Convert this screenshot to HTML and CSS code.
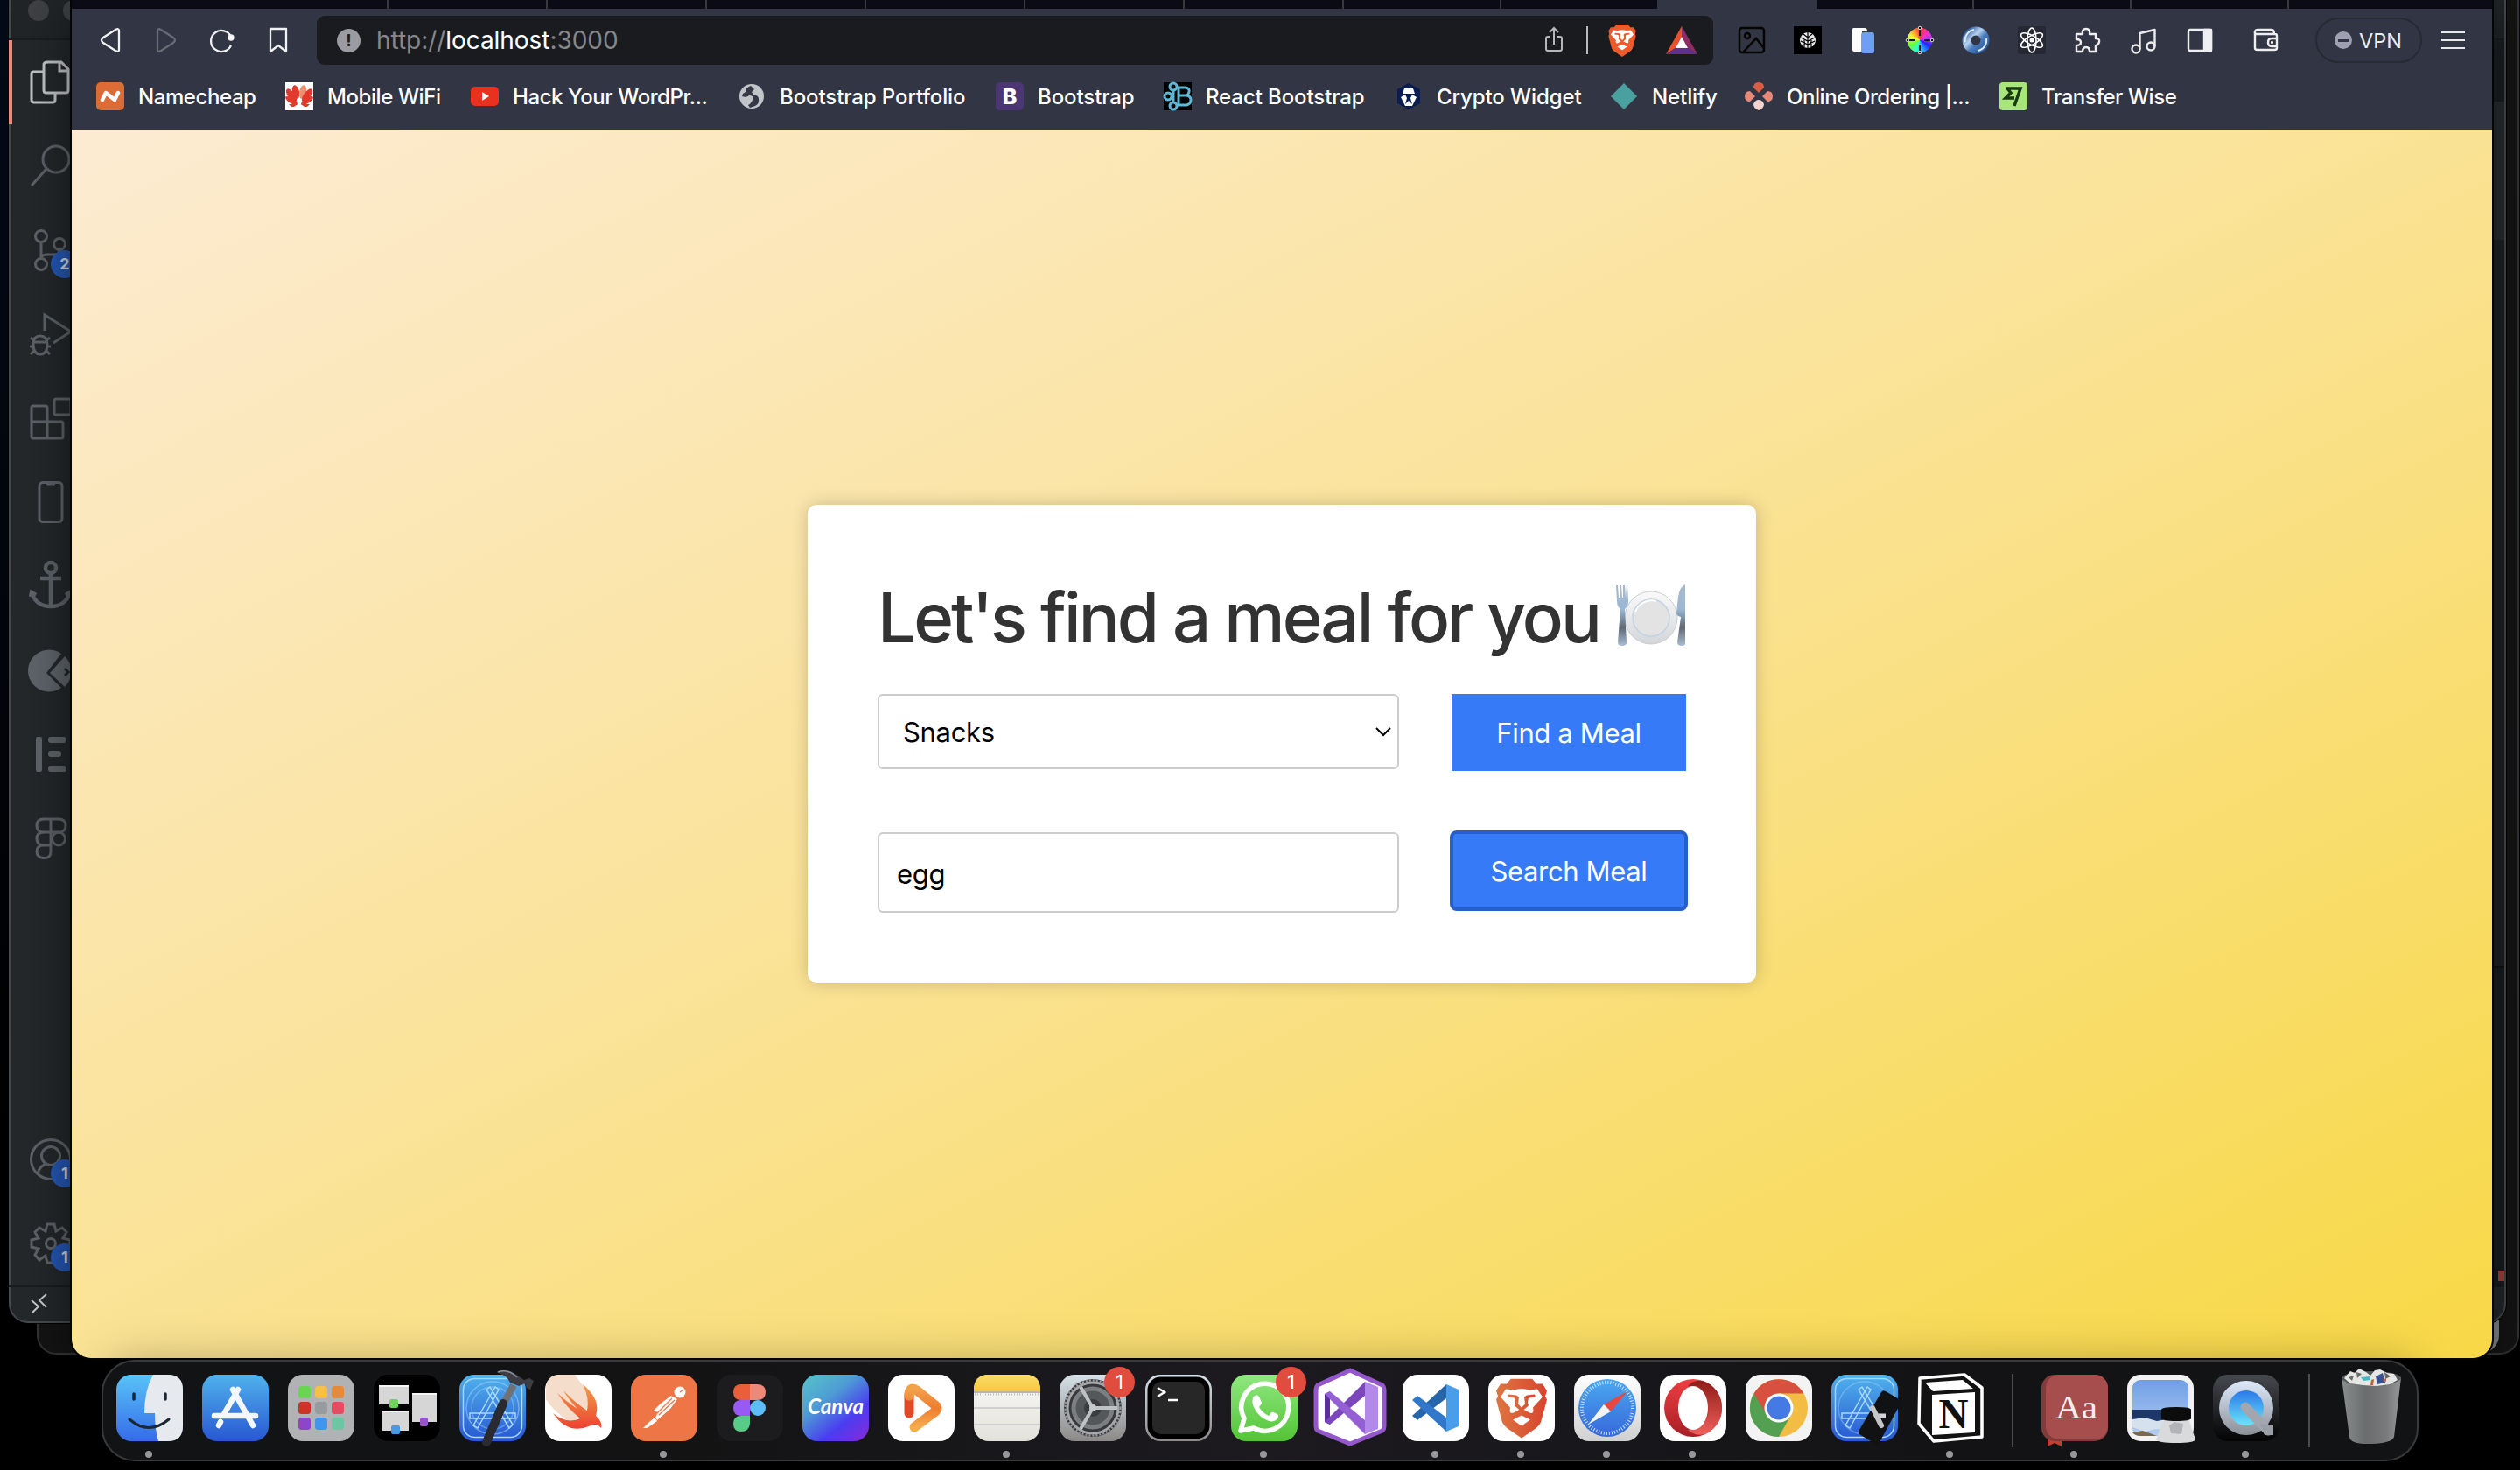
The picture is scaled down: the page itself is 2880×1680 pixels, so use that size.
FILE: index.html
```html
<!DOCTYPE html>
<html lang="en">
<head>
<meta charset="utf-8">
<title>Meal Finder</title>
<link rel="stylesheet" href="styles.css">
</head>
<body>
<svg class="defs" aria-hidden="true">
  <defs>
    <symbol id="brave" viewBox="0 0 58 68">
      <path d="M17 0H41L46 6L53 6L58 14L56 20L58 24L51 50Q49 54 45 57L29 68L13 57Q9 54 7 50L0 24L2 20L0 14L5 6L12 6Z"/>
      <path fill="#fff" d="M11 12L20 13Q29 10 38 13L47 12L53 21L42 33Q44 41 38 39L29 34L20 39Q14 41 16 33L5 21ZM29 42L39 47L29 54L19 47Z"/>
      <path d="M14 18L23 19L26 21L25 29L29 33L33 29L32 21L35 19L44 18L45 21L37 22L36 27L37 31L31 36V40H27V36L21 31L22 27L21 22L13 21Z"/>
    </symbol>
    <linearGradient id="gBlue" x1="0" y1="0" x2="0" y2="1"><stop stop-color="#50b2ec"/><stop offset="1" stop-color="#2857d2"/></linearGradient>
    <linearGradient id="gFinder" x1="0" y1="0" x2="0" y2="1"><stop stop-color="#58c4f8"/><stop offset="1" stop-color="#356be8"/></linearGradient>
    <linearGradient id="gSwift" x1="0" y1="0" x2="0" y2="1"><stop stop-color="#f2a04a"/><stop offset="1" stop-color="#ec4230"/></linearGradient>
    <linearGradient id="gCanva" x1="0" y1="0" x2=".8" y2="1"><stop stop-color="#58c4c8"/><stop offset=".4" stop-color="#4d9cd4"/><stop offset=".75" stop-color="#4a3df0"/><stop offset="1" stop-color="#7a2de0"/></linearGradient>
    <linearGradient id="gPlay" x1="0" y1="0" x2="0" y2="1"><stop stop-color="#f3a24c"/><stop offset=".5" stop-color="#ee7d30"/><stop offset="1" stop-color="#f5ac4d"/></linearGradient>
    <linearGradient id="gNote" x1="0" y1="0" x2="0" y2="1"><stop stop-color="#f8dc6c"/><stop offset="1" stop-color="#f6c93c"/></linearGradient>
    <linearGradient id="gPaper" x1="0" y1="0" x2="0" y2="1"><stop stop-color="#fafaf8"/><stop offset="1" stop-color="#e2e1da"/></linearGradient>
    <linearGradient id="gGrey" x1="0" y1="0" x2="0" y2="1"><stop stop-color="#d4e0e8"/><stop offset="1" stop-color="#8c8a88"/></linearGradient>
    <linearGradient id="gWa" x1="0" y1="0" x2="0" y2="1"><stop stop-color="#8fe880"/><stop offset="1" stop-color="#53c436"/></linearGradient>
    <linearGradient id="gBrave" x1="0" y1="0" x2="1" y2="0"><stop stop-color="#dd7540"/><stop offset="1" stop-color="#d8452f"/></linearGradient>
    <linearGradient id="gSafari" x1="0" y1="0" x2="0" y2="1"><stop stop-color="#4aa8f0"/><stop offset="1" stop-color="#3668da"/></linearGradient>
    <linearGradient id="gSilver" x1="0" y1="0" x2="0" y2="1"><stop stop-color="#fff"/><stop offset="1" stop-color="#d0d0d0"/></linearGradient>
    <linearGradient id="gOpera" x1="0" y1="0" x2="0" y2="1"><stop stop-color="#ee3f42"/><stop offset="1" stop-color="#a81e26"/></linearGradient>
    <linearGradient id="gOpera2" x1="0" y1="0" x2="0" y2="1"><stop stop-color="#8e1c18"/><stop offset="1" stop-color="#f0605c"/></linearGradient>
    <linearGradient id="gQt" x1="0" y1="0" x2="0" y2="1"><stop stop-color="#46494f"/><stop offset="1" stop-color="#030303"/></linearGradient>
    <linearGradient id="gQtIn" x1="0" y1="0" x2="0" y2="1"><stop stop-color="#2a78e8"/><stop offset="1" stop-color="#6ae4fa"/></linearGradient>
    <linearGradient id="gQtRing" x1="0" y1="0" x2="0" y2="1"><stop stop-color="#dde9fa"/><stop offset="1" stop-color="#8b9098"/></linearGradient>
    <linearGradient id="gSky" x1="0" y1="0" x2="0" y2="1"><stop stop-color="#6f9ee6"/><stop offset="1" stop-color="#b4cdf2"/></linearGradient>
    <linearGradient id="gTrash" x1="0" y1="0" x2="1" y2="0"><stop stop-color="#8b8e8f"/><stop offset=".4" stop-color="#6a6d6e"/><stop offset=".75" stop-color="#77797a"/><stop offset="1" stop-color="#969899"/></linearGradient>
    <linearGradient id="gPlate" x1="0" y1="0" x2="0" y2="1"><stop stop-color="#fafafa"/><stop offset="1" stop-color="#d3d6da"/></linearGradient>
    <linearGradient id="gMetal" x1="0" y1="0" x2="0" y2="1"><stop stop-color="#a9b8c8"/><stop offset=".4" stop-color="#9ab8d6"/><stop offset=".7" stop-color="#5f6873"/><stop offset="1" stop-color="#a9bdd2"/></linearGradient>
    <linearGradient id="gRing" x1="0" y1="0" x2="1" y2="1"><stop stop-color="#2f5f9f"/><stop offset=".35" stop-color="#b9d3f0"/><stop offset=".6" stop-color="#4a7cbd"/><stop offset="1" stop-color="#2c5a98"/></linearGradient>
  </defs>
</svg>

<main class="desktop">
  <div class="win win-back"></div>
  <div class="win win-mid"></div>

  <section class="win editor">
    <div class="editor-title"><i class="dot"></i><i class="dot"></i></div>
    <div class="editor-body">
      <nav class="activity">
        <div class="act active"><svg viewBox="0 0 48 48"><path d="M16 12H4Q2 12 2 14V44Q2 47 5 47H26Q29 47 29 44V37M20 1H36L44 9V33Q44 36 41 36H19Q16 36 16 33V4Q16 1 20 1ZM34 1V11H44"/></svg></div>
        <div class="act"><svg viewBox="0 0 48 48"><circle cx="30" cy="16" r="15"/><path d="M19 27L2 46"/></svg></div>
        <div class="act"><svg viewBox="0 0 48 48"><circle cx="13" cy="8" r="6.5"/><circle cx="13" cy="40" r="6.5"/><circle cx="34" cy="17" r="6.5"/><path d="M13 15V33M34 24Q34 29 28 29H20Q14 29 13 33"/></svg><b class="badge">2</b></div>
        <div class="act"><svg viewBox="0 0 48 48"><path d="M17 20V2L47 21L27 34"/><path d="M4 35Q4 26 12 26T20 35Q20 47 12 47T4 35ZM4 33H20M0 38H4M20 38H24M1 28L5 31M23 28L19 31M1 47L5 43M23 47L19 43"/></svg></div>
        <div class="act"><svg viewBox="0 0 48 48"><path d="M4 10H18Q20 10 20 12V28H36Q38 28 38 30V45Q38 47 36 47H4Q2 47 2 45V12Q2 10 4 10ZM2 28H20V47"/><rect x="28" y="2" width="19" height="18" rx="2"/></svg></div>
        <div class="act"><svg viewBox="0 0 48 48"><rect x="11" y="1.500" width="26" height="45" rx="4"/><path d="M19 3H29"/></svg></div>
        <div class="act"><svg viewBox="0 0 48 48" class="heavy"><circle cx="24" cy="3" r="6"/><path d="M24 9V49M12 15H36M2 32Q8 47 24 47T46 32M1 36L2 31L7 34M47 36L46 31L41 34"/></svg></div>
        <div class="act"><svg viewBox="0 0 48 48" class="solid"><path d="M36 5A24 24 0 1 0 36 44L19 27ZM40 8L23 27L40 43A24 24 0 0 0 40 8Z"/><path d="M40 22L44 26L40 30" fill="none" stroke="#22262a" stroke-width="3"/></svg></div>
        <div class="act"><svg viewBox="0 0 48 48" class="solid"><rect x="7" y="4" width="7" height="40" rx="2"/><rect x="21" y="4" width="21" height="7" rx="3"/><rect x="21" y="20" width="15" height="7" rx="3"/><rect x="21" y="37" width="21" height="7" rx="3"/></svg></div>
        <div class="act"><svg viewBox="0 0 48 48"><path d="M24 2H16Q8 2 8 9.500T16 17H24ZM24 2H33Q41 2 41 9.500T33 17H24ZM24 17H16Q8 17 8 24.500T16 32H24ZM24 32H16Q8 32 8 39T16 46.500T24 39Z"/><circle cx="33" cy="24.500" r="7.500"/></svg></div>
        <div class="act spacer"></div>
        <div class="act"><svg viewBox="0 0 48 48"><circle cx="24" cy="24" r="22.500"/><circle cx="24" cy="20" r="10.500"/><path d="M9 40Q12 30 20 29M39 40Q36 30 28 29"/></svg><b class="badge">1</b></div>
        <div class="act"><svg viewBox="0 0 48 48"><path d="M20 2H28L30 10L37 6L42 11L38 18L46 20V28L38 30L42 37L37 42L30 38L28 46H20L18 38L11 43L6 37L10 30L2 28V20L10 18L6 11L11 6L18 10Z"/><circle cx="24" cy="24" r="5.500"/></svg><b class="badge">1</b></div>
      </nav>
      <div class="editor-edge"><i class="e1"></i><i class="e2"></i><i class="e3"></i><i class="e4"><b></b></i></div>
    </div>
    <div class="status"><svg viewBox="0 0 20 24" width="20" height="24"><path d="M1 8L9 15L1 23M18 1L10 8L18 16" fill="none" stroke="#c8cacc" stroke-width="2"/></svg></div>
  </section>

  <section class="win browser">
    <div class="tabs"><i></i><i></i><i></i><i></i><i></i><i></i><i></i><i></i><i></i><i class="on"></i><i></i><i></i><i></i><i></i></div>
    <div class="toolbar">
      <div class="nav">
        <svg viewBox="0 0 32 32"><path d="M26 5V27Q26 30 22 28L8 19Q4 16 8 13L22 4Q26 2 26 5Z"/></svg>
        <svg viewBox="0 0 32 32" class="off"><path d="M6 5V27Q6 30 10 28L24 19Q28 16 24 13L10 4Q6 2 6 5Z"/></svg>
        <svg viewBox="0 0 32 32"><path d="M26 12A12 12 0 1 0 26 22"/><circle cx="26" cy="13" r="2.500" fill="#fff"/></svg>
        <svg viewBox="0 0 32 32"><path d="M7 3H25V29L16 22L7 29Z"/></svg>
      </div>
      <div class="urlbar">
        <span class="info">!</span>
        <span class="url">http://<em>localhost</em>:3000</span>
        <svg class="share" viewBox="0 0 32 32"><path d="M12 12H9Q7 12 7 14V26Q7 28 9 28H23Q25 28 25 26V14Q25 12 23 12H20M16 21V3M11 7L16 2L21 7"/></svg>
        <i class="sep"></i>
        <svg class="lion" viewBox="0 0 58 68" fill="#ee5a29"><use href="#brave"/></svg>
        <svg class="bat" viewBox="0 0 36 32"><path fill="#e9502c" d="M18 0L0 32L11 25L18 12Z"/><path fill="#8f2c63" d="M18 0L36 32L25 25L18 12Z"/><path fill="#5f2f91" d="M0 32H36L25 25H11Z"/><path fill="#fff" d="M18 12L25 25H11Z"/></svg>
      </div>
      <div class="ext">
        <svg viewBox="0 0 32 32"><g fill="none" stroke="#050505" stroke-width="2.500"><rect x="2" y="2" width="28" height="28" rx="3"/><circle cx="11" cy="11" r="3"/><path d="M6 30L21 14L30 25"/></g></svg>
        <svg viewBox="0 0 32 32"><rect width="32" height="32"/><circle cx="16" cy="16" r="9" fill="#e8e8e8"/><path d="M16 7V25M8 13L16 17L24 13M8 17L16 21L24 17M11 9L16 13L21 9M12 16V24M20 16V24" fill="none" stroke="#000" stroke-width="1.200"/></svg>
        <svg viewBox="0 0 32 32"><path fill="#fff" d="M3 3Q3 2 5 2H17Q20 2 20 6H14V29H5Q3 29 3 27Z"/><rect x="13" y="7" width="15" height="24" rx="3" fill="#6f9ff5"/></svg>
        <div class="wheel"><svg viewBox="0 0 32 32"><path d="M16 1V11M16 21V31M1 16H11M21 16H31" stroke="#111" stroke-width="2"/><g fill="#111" stroke="#ddd" stroke-width="1"><circle cx="16" cy="2" r="1.800"/><circle cx="16" cy="30" r="1.800"/><circle cx="2" cy="16" r="1.800"/><circle cx="30" cy="16" r="1.800"/></g></svg></div>
        <svg viewBox="0 0 32 32"><circle cx="16" cy="16" r="10.500" fill="none" stroke="url(#gRing)" stroke-width="10"/><path d="M4 18A12 12 0 0 1 14 4M28 14A12 12 0 0 1 18 28" fill="none" stroke="#dbe9fa" stroke-width="2"/></svg>
        <svg viewBox="0 0 32 32"><rect width="32" height="32" rx="2" fill="#262833"/><g fill="none" stroke="#fff" stroke-width="1.600"><ellipse cx="16" cy="16" rx="5" ry="14"/><ellipse cx="16" cy="16" rx="5" ry="14" transform="rotate(60 16 16)"/><ellipse cx="16" cy="16" rx="5" ry="14" transform="rotate(120 16 16)"/></g><circle cx="16" cy="16" r="2.500" fill="#fff"/></svg>
        <svg viewBox="0 0 32 32" class="ln"><path d="M3 9H10Q9 3 14 3T18 9H25V14Q30 14 29 18T25 22V29H18Q18 24 14 24T10 29H3V22Q8 22 8 18.500T3 15Z"/></svg>
        <svg viewBox="0 0 32 32" class="ln"><circle cx="7" cy="26" r="4.500"/><circle cx="24" cy="23" r="4.500"/><path d="M11.500 26V8L28.500 4V23"/></svg>
        <svg viewBox="0 0 32 32" class="ln"><rect x="3" y="4" width="26" height="24" rx="2"/><path d="M21 4H29V28H21Z" fill="#f0f0f2"/></svg>
        <svg viewBox="0 0 32 32" class="ln wallet"><path d="M28 14V11Q28 9 26 9H3M3 6V25Q3 27 6 27H25Q28 27 28 25V23M28 14V23H22Q18 23 18 18.500T22 14ZM3 9Q2 4 6 4H22Q25 4 25 9M21 18.500H24"/></svg>
      </div>
      <div class="vpn"><i></i>VPN</div>
      <div class="menu"><i></i><i></i><i></i></div>
    </div>
    <div class="bookmarks">
      <a><svg viewBox="0 0 32 32"><rect width="32" height="32" rx="5" fill="#dd6b36"/><path d="M7 20L11 12L21 20L25 12" fill="none" stroke="#fff" stroke-width="4.500" stroke-linecap="round" stroke-linejoin="round"/></svg><span class="t2">Namecheap</span></a>
      <a><svg viewBox="0 0 32 32"><rect width="32" height="32" fill="#fff"/><g fill="#e23a2c"><ellipse cx="12" cy="11" rx="4" ry="8" transform="rotate(-12 12 11)"/><ellipse cx="20" cy="11" rx="4" ry="8" transform="rotate(12 20 11)" fill="#ee9070"/><ellipse cx="7" cy="15" rx="4" ry="9" transform="rotate(-35 7 15)"/><ellipse cx="25" cy="15" rx="4" ry="9" transform="rotate(35 25 15)"/><ellipse cx="7" cy="21" rx="3" ry="8" transform="rotate(-58 7 21)"/><ellipse cx="25" cy="21" rx="3" ry="8" transform="rotate(58 25 21)"/><path d="M4 25H14L10 28H7ZM28 25H18L22 28H25Z"/></g></svg><span class="t2">Mobile WiFi</span></a>
      <a><svg viewBox="0 0 32 32"><rect y="5" width="32" height="22" rx="5" fill="#e8321f"/><path d="M13 11V21L21 16Z" fill="#fff"/></svg><span class="t2">Hack Your WordPr...</span></a>
      <a><svg viewBox="0 0 32 32"><circle cx="16" cy="16" r="14" fill="#c0c3c7"/><path d="M5 16Q10 18 13 15Q19 15 17 20T12 26L14 29L20 27Q25 24 24 19Q24 15 18 14L16 11L19 8L15 4Q9 6 9 11L6 13Z" fill="#343744"/></svg><span>Bootstrap Portfolio</span></a>
      <a><svg viewBox="0 0 32 32"><rect width="32" height="32" rx="5" fill="#4c3674"/><text x="16" y="25" class="bs">B</text></svg><span>Bootstrap</span></a>
      <a><svg viewBox="0 0 32 32"><rect width="32" height="32"/><g fill="none" stroke="#5cb8d6" stroke-width="3"><path d="M16 6H25Q30 7 29 11T25 15H17V26H26Q31 25 31 20T25 15M17 6V15"/><circle cx="11" cy="5" r="4"/><circle cx="5" cy="16" r="4"/><circle cx="11" cy="27" r="4"/><path d="M11 9V23"/></g></svg><span>React Bootstrap</span></a>
      <a><svg viewBox="0 0 32 32"><path fill="#0b1d50" d="M16 1L29 8V24L16 31L3 24V8Z"/><path fill="#fff" d="M11 7H21L23 13H9ZM7 17L12 14L14 18L12 25L16 21L20 25L18 18L20 14L25 17L20 27H12Z"/></svg><span>Crypto Widget</span></a>
      <a><svg viewBox="0 0 32 32"><path fill="#4aa09f" d="M16 1L31 16L16 31L1 16Z"/></svg><span>Netlify</span></a>
      <a><svg viewBox="0 0 32 32"><path fill="#dd5d43" d="M16 0Q22 0 22 6L16 12L10 6Q10 0 16 0Z"/><path fill="#e88a79" d="M0 16Q0 10 6 10L12 16L6 22Q0 22 0 16ZM32 16Q32 10 26 10L20 16L26 22Q32 22 32 16Z"/><path fill="#f5d5cf" d="M16 32Q10 30 10 25Q12 20 16 20T22 25Q22 30 16 32Z"/></svg><span class="t2">Online Ordering |...</span></a>
      <a><svg viewBox="0 0 32 32"><rect width="32" height="32" rx="4" fill="#a8e67c"/><path fill="none" stroke="#1a3a10" stroke-width="3.500" d="M8 7H24L17 27M9 7L13 12L7 18H17"/></svg><span class="t2">Transfer Wise</span></a>
    </div>
    <div class="page">
      <div class="card">
        <h1><span>Let's find a meal for you</span>
          <svg viewBox="0 0 80 72" role="img" aria-label="plate">
            <circle cx="40" cy="38" r="30" fill="url(#gPlate)" stroke="#c9cdd1" stroke-width="1"/>
            <circle cx="40" cy="38" r="21" fill="#e3e3e3" stroke="#c3d3e4" stroke-width="1.500"/><path d="M22 31A20 20 0 0 1 46 19" fill="none" stroke="#fff" stroke-width="2"/>
            <path fill="url(#gMetal)" d="M0 1H2L3 15H4V1H6L7 15H8V1H10L11 15L12 1H13L14 19Q14 25 10 28L12 66Q12 70 7 70T2 66L5 28Q1 25 1 19Z"/>
            <path fill="url(#gMetal)" d="M79 0Q73 2 71 14L69 32Q69 36 74 37L70 66Q70 70 75 70T79 66Z"/>
          </svg>
        </h1>
        <div class="row">
          <div class="field select"><span>Snacks</span><svg viewBox="0 0 18 11"><path d="M1 1L9 9L17 1" fill="none" stroke="#000" stroke-width="2"/></svg></div>
          <button class="btn find">Find a Meal</button>
        </div>
        <div class="row second">
          <div class="field input"><span>egg</span></div>
          <button class="btn focus">Search Meal</button>
        </div>
      </div>
    </div>
  </section>

  <nav class="dock">
    <div class="app run"><svg viewBox="0 0 76 76"><rect width="76" height="76" rx="17" fill="url(#gFinder)"/><path fill="#e6e9ee" d="M42 0H59Q76 0 76 17V59Q76 76 59 76H48Q44 62 44 44H32Q32 18 42 0Z"/><path d="M20 22V28M56 22V28" stroke="#1c2733" stroke-width="3.500" stroke-linecap="round"/><path d="M15 51Q37 70 60 51" fill="none" stroke="#1c2733" stroke-width="3" stroke-linecap="round"/></svg></div>
    <div class="app"><svg viewBox="0 0 76 76"><rect width="76" height="76" rx="17" fill="url(#gBlue)"/><path d="M35 17L58 58M41 17L25 45M21 54L19 58M14 47H61" fill="none" stroke="#f4f8fd" stroke-width="6.500" stroke-linecap="round"/></svg></div>
    <div class="app"><svg viewBox="0 0 76 76"><rect width="76" height="76" rx="17" fill="#b1b2b4"/><g><rect x="12" y="13" width="14" height="14" rx="3.500" fill="#68d650"/><rect x="31" y="13" width="14" height="14" rx="3.500" fill="#f5c044"/><rect x="50" y="13" width="14" height="14" rx="3.500" fill="#e58a38"/><rect x="12" y="31" width="14" height="14" rx="3.500" fill="#cf3328"/><rect x="31" y="31" width="14" height="14" rx="3.500" fill="#969c9e"/><rect x="50" y="31" width="14" height="14" rx="3.500" fill="#e84a62"/><rect x="12" y="49" width="14" height="14" rx="3.500" fill="#8e46c8"/><rect x="31" y="49" width="14" height="14" rx="3.500" fill="#3f96ee"/><rect x="50" y="49" width="14" height="14" rx="3.500" fill="#6cc6a4"/></g></svg></div>
    <div class="app"><svg viewBox="0 0 76 76"><rect width="76" height="76" rx="17" fill="#000"/><g fill="#d6d6d6"><path d="M6 12H40V34H6ZM44 21H72V54H44ZM10 41H40V64H10Z"/></g><path d="M6 12H40V14H6ZM44 21H72V23H44ZM10 41H40V43H10Z" fill="#f5f5f5"/><rect x="18" y="28" width="10" height="10" rx="2" fill="#6bd655"/><rect x="20" y="58" width="10" height="10" rx="2" fill="#459bea"/><rect x="53" y="49" width="9" height="10" rx="2" fill="#9752cc"/></svg></div>
    <div class="app"><svg viewBox="0 0 76 76"><rect width="76" height="76" rx="17" fill="url(#gBlue)"/><g fill="none" stroke="#a8d8f8" stroke-width="1.500"><rect x="4.500" y="4.500" width="67" height="67" rx="13"/><circle cx="38" cy="38" r="30" opacity=".5"/><circle cx="38" cy="38" r="24" opacity=".4"/><path d="M31 17L35 14L61 57L57 61ZM41 14L45 17L21 61L16 58ZM12 44H64V50H12Z"/></g><path d="M62 12L50 34" stroke="#6e7176" stroke-width="8"/><path d="M50 33L31 77" stroke="#2a2b30" stroke-width="10" stroke-linecap="round"/><path fill="#3b3d43" d="M42 -3Q54 -10 68 2L74 6L80 4L85 7L81 17L77 15L75 10L68 13L58 9Q54 0 42 -3Z"/><path d="M44 -3Q56 -7 66 3" fill="none" stroke="#8d9097" stroke-width="1.500"/></svg></div>
    <div class="app"><svg viewBox="0 0 76 76"><rect width="76" height="76" rx="17" fill="#fff"/><path d="M17 0H34L56 30L30 56Q8 40 1 28V17Q1 0 17 0Z" fill="#f4ddcb"/><path fill="url(#gSwift)" d="M43 11Q64 28 58 47Q66 54 64 61Q59 54 50 59Q26 69 9 44Q25 57 40 50Q24 37 14 21Q26 32 37 39Q28 30 21 18Q34 32 48 41Q51 27 43 11Z"/></svg></div>
    <div class="app run"><svg viewBox="0 0 76 76"><rect width="76" height="76" rx="17" fill="#ee7545"/><g fill="#fff"><circle cx="56" cy="20" r="6.500"/><path d="M46 24L53 28L45 39L30 52L28 49L31 43L26 41L34 33ZM27 49L30 53L20 60L18 61H14L20 55Z"/></g><g stroke="#ee7545" stroke-width="1.300" fill="none"><path d="M47 27L30 44M50 29L32 46M56 20L60 17"/></g></svg></div>
    <div class="app"><svg viewBox="0 0 76 76"><rect width="76" height="76" rx="17" fill="#1c1c1e"/><path fill="#ea5f3a" d="M38 11H28Q19 11 19 20T28 29H38Z"/><path fill="#ee8878" d="M38 11H46Q56 11 56 20T46 29H38Z"/><path fill="#9859f5" d="M38 29H28Q19 29 19 38T28 47H38Z"/><path fill="#58cc86" d="M38 47H28Q19 47 19 56T28 65T38 56Z"/><circle cx="47" cy="38" r="9" fill="#5cbdf8"/></svg></div>
    <div class="app"><svg viewBox="0 0 76 76"><rect width="76" height="76" rx="17" fill="url(#gCanva)"/><text x="38" y="45" class="canva" textLength="64" lengthAdjust="spacingAndGlyphs">Canva</text></svg></div>
    <div class="app"><svg viewBox="0 0 76 76"><rect width="76" height="76" rx="17" fill="#fff"/><g fill="none" stroke-width="11" stroke-linecap="round" stroke-linejoin="round"><path d="M24 44V23" stroke="#e1492a"/><path d="M24 24Q24 12 33 18L54 35Q58 38 54 42L30 60" stroke="url(#gPlay)"/></g></svg></div>
    <div class="app run"><svg viewBox="0 0 76 76"><rect width="76" height="76" rx="17" fill="url(#gPaper)"/><path fill="url(#gNote)" d="M0 19V17Q0 0 17 0H59Q76 0 76 17V19Z"/><path d="M0 20H76" stroke="#a8a08c" stroke-width="1.500"/><path d="M1 22.500H76" stroke="#bbb" stroke-width="2" stroke-dasharray="1 2"/><path d="M0 38H76M0 57H76" stroke="#cfcfd2" stroke-width="2"/></svg></div>
    <div class="app"><svg viewBox="0 0 76 76"><rect width="76" height="76" rx="17" fill="url(#gGrey)"/><circle cx="38" cy="38" r="33" fill="#37393b"/><circle cx="38" cy="38" r="29" fill="none" stroke="#a5a8aa" stroke-width="3"/><circle cx="38" cy="38" r="31.500" fill="none" stroke="#999" stroke-width="2.500" stroke-dasharray="2 2"/><circle cx="38" cy="38" r="22" fill="#55585a" stroke="#7c7f81" stroke-width="5"/><circle cx="38" cy="38" r="10" fill="#3b3d3f"/><path d="M38 38H66M38 38L24 14M38 38L24 62" stroke="#bfc2c4" stroke-width="4"/><circle cx="38" cy="38" r="4" fill="#c6c8ca"/></svg><b class="note">1</b></div>
    <div class="app"><svg viewBox="0 0 76 76"><rect width="76" height="76" rx="17" fill="url(#gGrey)"/><rect x="2.500" y="2.500" width="71" height="71" rx="15" fill="#000"/><rect x="8" y="8" width="60" height="60" rx="10" fill="#272728"/><path d="M14 15L22 20L14 25M26 29H37" fill="none" stroke="#fff" stroke-width="2.500"/></svg></div>
    <div class="app run"><svg viewBox="0 0 76 76"><rect width="76" height="76" rx="17" fill="url(#gWa)"/><path d="M11 64L15 50A27 27 0 1 1 26 61Z" fill="none" stroke="#fff" stroke-width="5.500" stroke-linejoin="round"/><path fill="#fff" d="M25 26Q29 21 32 25L35 32Q35 34 32 37Q36 44 43 47L46 43Q48 42 54 46Q55 51 49 53Q43 55 33 47Q22 36 25 26Z"/></svg><b class="note">1</b></div>
    <div class="app"><svg viewBox="0 0 76 76"><path d="M38 -5L75 12Q77 14 77 17V59Q77 62 75 64L38 79L1 64Q-1 62 -1 59V17Q-1 14 1 12Z" fill="#fff" stroke="#9458cc" stroke-width="5" stroke-linejoin="round"/><path fill="#5b2e9a" d="M9 22L15 19V57L9 54Z"/><path fill="#7c46bc" d="M9 54L55 8V24L15 57Z"/><path fill="#9560d4" d="M9 22L15 19L55 52V68Z"/><path fill="#b288ea" d="M55 8L70 14V62L55 68Z"/></svg></div>
    <div class="app run"><svg viewBox="0 0 76 76"><rect width="76" height="76" rx="17" fill="#fff"/><path fill="#2765ab" d="M11 47L50 11V27L17 52Z"/><path fill="#3178ca" d="M11 29L17 24L50 49V65Z"/><path fill="#4a9de9" d="M50 11L64 17V59L50 65Z"/></svg></div>
    <div class="app run"><svg viewBox="0 0 76 76"><rect width="76" height="76" rx="17" fill="#fff"/><svg x="9" y="4.500" width="58" height="68" viewBox="0 0 58 68" fill="url(#gBrave)"><use href="#brave"/></svg></svg></div>
    <div class="app run"><svg viewBox="0 0 76 76"><rect width="76" height="76" rx="17" fill="url(#gSilver)"/><circle cx="38" cy="38" r="33" fill="url(#gSafari)"/><circle cx="38" cy="38" r="29" fill="none" stroke="#cfe4fb" stroke-width="4" stroke-dasharray="1 2.040"/><path fill="#e8483e" d="M61 19L34 34L42 42Z"/><path fill="#f3f3f3" d="M16 57L34 34L42 42Z"/></svg></div>
    <div class="app run"><svg viewBox="0 0 76 76"><rect width="76" height="76" rx="17" fill="#fff"/><ellipse cx="38" cy="38" rx="33" ry="33" fill="url(#gOpera)"/><path fill="url(#gOpera2)" d="M32 13Q42 3 54 9Q71 19 71 38T54 67Q42 72 32 63Q56 60 56 38T32 13Z"/><ellipse cx="38" cy="38" rx="17" ry="25" fill="#fff"/></svg></div>
    <div class="app"><svg viewBox="0 0 76 76"><rect width="76" height="76" rx="17" fill="#f3f3f3"/><circle cx="38" cy="38" r="33" fill="#f3bd43"/><path fill="#53a052" d="M38 38L52 46L38 71A33 33 0 0 1 9 22Z"/><path fill="#d8503f" d="M9.500 21.500A33 33 0 0 1 66.500 21.500H38L24 46Z"/><circle cx="38" cy="38" r="16.500" fill="#fff"/><circle cx="38" cy="38" r="13.500" fill="#4579e4"/></svg></div>
    <div class="app"><svg viewBox="0 0 76 76"><rect width="76" height="76" rx="17" fill="url(#gBlue)"/><g fill="none" stroke="#a8d8f8" stroke-width="1.500"><rect x="4.500" y="4.500" width="67" height="67" rx="13"/><circle cx="38" cy="38" r="30" opacity=".4"/><path d="M31 17L35 14L61 57L57 61ZM41 14L45 17L21 61L16 58ZM12 44H64V50H12Z"/></g><path d="M62 19L79 29Q80 30 79 33L54 79Q52 81 50 79L32 68Q30 66 32 63L57 20Q59 17 62 19Z" fill="#111214"/><path d="M50 47H62" stroke="#d4d4d6" stroke-width="5"/><path d="M47 38L57 58" stroke="#c6c6c8" stroke-width="6" stroke-linecap="round"/></svg></div>
    <div class="app run"><svg viewBox="0 0 76 76"><path fill="#121212" stroke="#fff" stroke-width="3.500" stroke-linejoin="round" d="M3 4L54 0L74 15V71L19 76L2 56Z"/><path fill="#fff" d="M9 9L52 6L64 16L18 19ZM17 23L66 20V66L17 69Z"/><text x="41.500" y="61" class="notion" textLength="34" lengthAdjust="spacingAndGlyphs">N</text></svg></div>
    <i class="rule"></i>
    <div class="app run"><svg viewBox="0 0 76 76"><path fill="#c23e30" d="M7 70H23V82L15 78L7 82Z"/><rect width="76" height="76" rx="15" fill="#823a3b"/><rect x="5" width="71" height="74" rx="15" fill="#a64e4e"/><text x="40" y="50" class="aa" textLength="48" lengthAdjust="spacingAndGlyphs">Aa</text></svg></div>
    <div class="app"><svg viewBox="0 0 76 76"><rect width="76" height="76" rx="15" fill="#f2f2f2"/><rect x="6" y="6" width="64" height="64" rx="9" fill="url(#gSky)"/><path fill="#1d3768" d="M6 40H70V54H6Z"/><path fill="#d5e2ee" d="M6 51L20 49L34 53L50 50V66L34 62L20 65L6 60Z"/><path fill="#7b6850" d="M6 66L18 64L34 70H15Q9 70 6 66Z"/><path fill="#d8dadb" d="M42 50H70L78 74Q77 78 56 78T33 74Z"/><path fill="#9a9c9e" d="M48 58L54 54L64 56L62 68L50 67Z" opacity=".6"/><path fill="#0c0c0d" d="M39 40Q39 37 56 37T73 40V50Q72 53 56 53T39 50Z"/></svg></div>
    <div class="app run"><svg viewBox="0 0 76 76"><rect width="76" height="76" rx="17" fill="url(#gQt)"/><circle cx="38" cy="38" r="31" fill="url(#gQtRing)"/><circle cx="38" cy="38" r="20" fill="url(#gQtIn)"/><path d="M37 37L63 64" stroke="#a2a7af" stroke-width="11" stroke-linecap="round"/><path fill="#9a9fa7" d="M54 56L69 58V69H59Z"/></svg></div>
    <i class="rule last"></i>
    <div class="app trash"><svg viewBox="0 0 68 86"><path fill="url(#gTrash)" d="M0 10H68L60 78Q58 85 34 86T9 78Z"/><ellipse cx="34" cy="11" rx="34" ry="8" fill="#55585a"/><path fill="#e6e6e4" d="M3 11L10 3L15 5L20 0L28 4L33 8L38 2L44 1L52 5L60 6L64 13L55 18L40 20L24 19L10 17Z"/><path fill="#6a6a66" d="M8 10L14 8L12 14ZM17 4L23 6L18 11ZM49 4L56 9L50 12Z"/><path fill="#4cb7c4" d="M22 10L32 9L33 13L25 14Z"/><path fill="#38508e" d="M39 9L47 5L50 16L41 18Z"/><path fill="#c2613a" d="M34 13L37 12L36 19L33 19ZM47 13L51 11V15Z"/></svg></div>
  </nav>
</main>
</body>
</html>
```
FILE: styles.css
```css
* { box-sizing: border-box; }
body { margin: 0; background: #000; font-family: Inter, "Liberation Sans", sans-serif; }
.defs { position: absolute; width: 0; height: 0; }
svg { display: block; overflow: visible; flex: none; }
i, em, b { font-style: normal; }

.desktop { position: relative; width: 2880px; height: 1680px; overflow: hidden; background: linear-gradient(180deg, #020a18 0, #010308 900px, #000 1300px); }
.win { position: absolute; overflow: hidden; }
.win-back { left: 42px; top: 0; width: 2837px; height: 1548px; background: #141414; border: 2px solid #333; border-top: 0; border-radius: 0 0 22px 22px; }
.win-mid { left: 1000px; top: 0; width: 1856px; height: 1546px; background: #85878d; border-radius: 0 0 20px 20px; }

/* Code editor, mostly hidden behind the browser */
.editor { left: 10px; top: 0; width: 2854px; height: 1512px; display: flex; flex-direction: column; background: #24282b; border: 2px solid #484b4e; border-top: 0; border-left: 0; border-radius: 0 0 22px 22px; box-shadow: 0 0 0 1px #000; }
.editor-title { height: 46px; display: flex; gap: 16px; padding-left: 22px; background: #212528; border-bottom: 2px solid #191c1e; box-shadow: inset 2px 0 #484b4e; }
.dot { width: 24px; height: 24px; border-radius: 50%; background: #3e4143; }
.editor-body { flex: 1; display: flex; justify-content: space-between; }
.activity { display: flex; flex-direction: column; width: 76px; box-shadow: inset 2px 0 #484b4e; }
.act { position: relative; height: 96px; padding: 24px 0 0 24px; }
.act.spacer { flex: 1; }
.act svg { width: 48px; height: 48px; fill: none; stroke: #5d6369; stroke-width: 3; }
.act svg.heavy { stroke-width: 4.5; }
.act svg.solid { fill: #5f656b; stroke: none; }
.act.active { box-shadow: inset 4px 0 #f08d7a; }
.act.active svg { stroke: #c3c6c9; }
.badge { position: absolute; left: 48px; top: 48px; width: 32px; height: 32px; border-radius: 50%; background: #2558b4; color: #cdd5e4; font: 700 18px/32px Inter, sans-serif; text-align: center; }
.editor-edge { width: 14px; display: flex; flex-direction: column; background: #1e2125; }
.e1 { height: 70px; background: #1a1f21; }
.e2 { height: 158px; background: #292d31; }
.e3 { height: 830px; }
.e4 { flex: 1; padding: 346px 0 0 7px; background: #191d20; border-top: 2px solid #111; }
.e4 b { display: block; width: 7px; height: 12px; background: #a8433f; }
.status { height: 41px; border-top: 2px solid #191c1e; padding: 7px 0 0 25px; box-shadow: inset 2px 0 #484b4e; border-bottom-left-radius: 20px; }

/* Browser window */
.browser { left: 82px; top: 0; width: 2766px; height: 1552px; display: flex; flex-direction: column; border-radius: 0 0 22px 22px; box-shadow: 0 0 0 2px #050505, 0 12px 60px rgba(0,0,0,.55); background: #323543; }
.tabs { height: 10px; display: grid; grid-template-columns: 362px repeat(6, 182px) 180px 178px 182px 180px 180px 180px 230px; background: #0b0b15; }
.tabs i { border-right: 2px solid #38383d; }
.tabs i:nth-child(9), .tabs i:nth-child(14) { border: 0; }
.tabs .on { background: #323543; border: 0; }
.toolbar { height: 72px; display: flex; align-items: center; padding-left: 28px; }
.nav { display: flex; gap: 32px; margin-right: 28px; }
.nav svg { width: 32px; height: 32px; fill: none; stroke: #f2f2f4; stroke-width: 2.3; stroke-linejoin: round; }
.nav svg.off { stroke: #686b76; }
.urlbar { width: 1596px; height: 56px; border-radius: 9px; background: #1a1b1f; display: flex; align-items: center; padding: 0 18px 0 23px; }
.info { width: 27px; height: 27px; border-radius: 50%; background: #9a9ca1; color: #1a1b1f; font: 700 19px/27px Inter, sans-serif; text-align: center; margin-right: 18px; }
.url { flex: 1; font-size: 28px; letter-spacing: -.05px; color: #85878a; white-space: nowrap; }
.url em { color: #fff; }
.share { width: 32px; height: 32px; fill: none; stroke: #b6b7ba; stroke-width: 2; }
.sep { width: 2px; height: 32px; background: #b8b9bc; margin: 0 23px 0 21px; }
.lion { width: 32px; height: 37px; margin-right: 34px; }
.bat { width: 36px; height: 32px; }
.ext { display: flex; gap: 32px; margin-left: 28px; }
.ext svg { width: 32px; height: 32px; }
.ext .ln { fill: none; stroke: #eeeef0; stroke-width: 2.4; stroke-linejoin: round; }
.ext .wallet { margin-left: 12px; }
.wheel { width: 32px; height: 32px; border-radius: 50%; background: radial-gradient(circle, transparent 14px, #323543 14.5px), conic-gradient(#f33, #e3c 50deg, #a3f 85deg, #22f 120deg, #3af 165deg, #3fc 200deg, #6f3 240deg, #ef3 290deg, #f93 330deg, #f33); }
.vpn { display: flex; align-items: center; gap: 8px; width: 122px; height: 52px; margin-left: 40px; padding-left: 20px; border: 2px solid #272933; border-radius: 26px; color: #ececf0; font-size: 23.500px; }
.vpn i { display: flex; align-items: center; justify-content: center; width: 20px; height: 20px; border-radius: 50%; background: #9fa1b2; }
.vpn i::after { content: ""; width: 12px; height: 3px; background: #323543; }
.menu { display: flex; flex-direction: column; gap: 7px; margin-left: 22px; }
.menu i { width: 27px; height: 2px; background: #e8e8ea; }
.bookmarks { height: 66px; display: grid; grid-template-columns: 216px 212px 305px 295px 192px 264px 246px 154px 291px 240px; padding: 0 0 10px 28px; align-items: center; }
.bookmarks a { display: flex; align-items: center; gap: 16px; color: #fff; font-size: 24px; font-weight: 500; letter-spacing: -.1px; white-space: nowrap; }
.bookmarks .t2 { letter-spacing: -.42px; }
.bookmarks svg { width: 32px; height: 32px; letter-spacing: 0; }
.bs { font: 800 25px Inter, sans-serif; fill: #fff; text-anchor: middle; }

/* Meal finder page */
.page { flex: 1; display: flex; align-items: center; justify-content: center; background: linear-gradient(to bottom right, #fcebd2, #fae294 50%, #f8d846); }
.card { width: 1084px; height: 546px; padding: 79px 80px 80px; background: #fff; border-radius: 10px; box-shadow: 0 0 20px rgba(0,0,0,.2); }
.card h1 { display: flex; align-items: center; justify-content: space-between; height: 96px; margin: 0 0 41px; color: #333; font-size: 78px; font-weight: 550; letter-spacing: -2.9px; white-space: nowrap; }
.card h1 span { padding-top: 2px; }
.card h1 svg { width: 80px; height: 72px; }
.row { display: flex; justify-content: space-between; height: 88px; }
.row.second { margin-top: 70px; height: 92px; }
.field { display: flex; align-items: center; width: 596px; border: 2px solid #ccc; border-radius: 6px; font-size: 31px; letter-spacing: -.3px; color: #000; }
.select { height: 86px; padding: 0 7px 0 27px; justify-content: space-between; }
.select svg { width: 18px; height: 11px; }
.input { height: 92px; padding: 2px 0 0 20px; }
.btn { width: 268px; height: 88px; margin: 0; padding: 0; border: 0; background: #367af7; color: #fff; font: 400 31px Inter, sans-serif; letter-spacing: -.35px; }
.btn.focus { width: 272px; height: 92px; margin: -2px -2px 0 0; border: 4px solid #265fc8; border-radius: 8px; }

/* Dock */
.dock { position: absolute; left: 116px; top: 1554px; width: 2648px; height: 116px; display: flex; gap: 22px; padding: 15px 0 0 15px; border: 2px solid #3a3a3c; border-radius: 38px; background: linear-gradient(90deg, #121315, #131314 25%, #1c1a1f 50%, #131315 80%, #121315); box-shadow: 0 0 50px rgba(0,0,0,.25); }
.app { position: relative; width: 76px; height: 76px; flex: none; }
.app > svg { width: 76px; height: 76px; }
.run::after { content: ""; position: absolute; left: 33px; top: 87px; width: 8px; height: 8px; border-radius: 50%; background: #98989a; }
.note { position: absolute; left: 51px; top: -9px; width: 35px; height: 35px; border-radius: 50%; background: #e04c3e; color: #fff; font: 400 22px/35px Inter, sans-serif; text-align: center; }
.rule { width: 2px; height: 84px; margin: -1px 10px 0 10px; background: #4b4b4d; flex: none; }
.rule.last { margin: -1px 14px 0 11px; }
.app.trash { width: 68px; }
.trash > svg { width: 68px; height: 86px; margin-top: -7px; }
.canva { font: italic 700 24px Lato, sans-serif; fill: #fff; text-anchor: middle; }
.notion { font: 700 48px "Liberation Serif", serif; fill: #111; text-anchor: middle; }
.aa { font: 400 38px "Liberation Serif", serif; fill: #f3eeec; text-anchor: middle; }
```
